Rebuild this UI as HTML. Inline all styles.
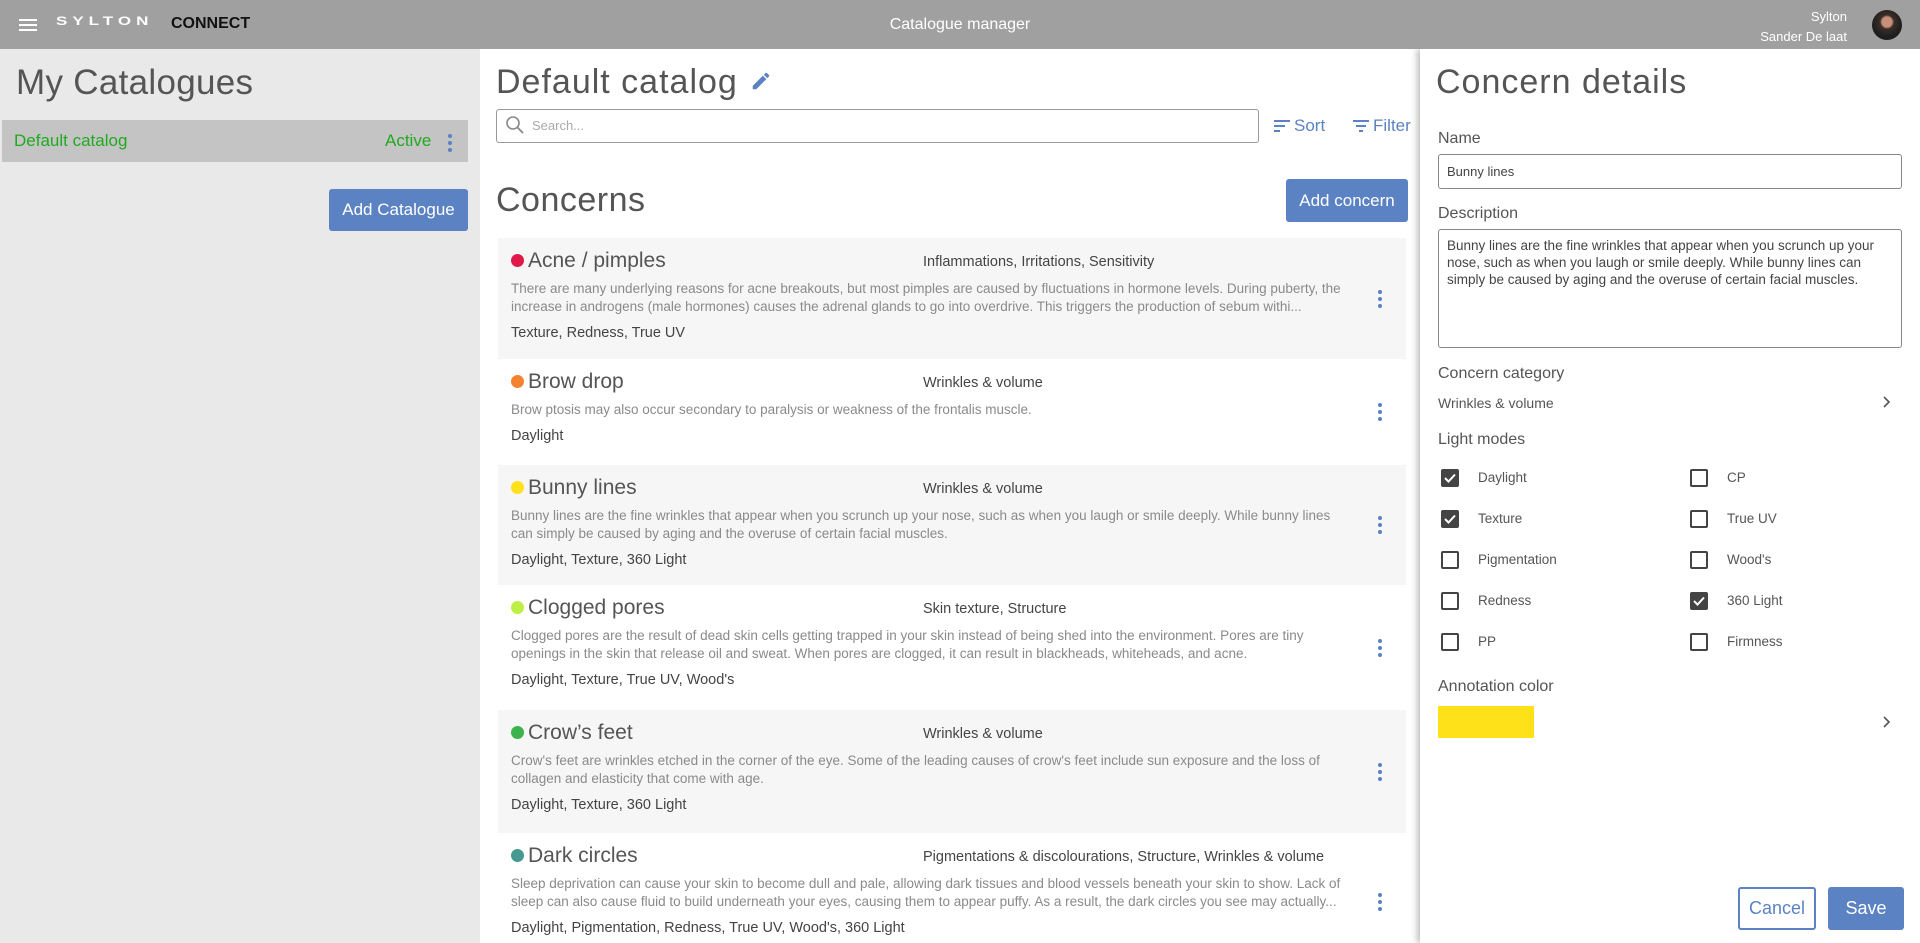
<!DOCTYPE html>
<html><head><meta charset="utf-8"><style>
*{box-sizing:border-box;margin:0;padding:0}
body{width:1920px;height:943px;overflow:hidden;background:#fff;font-family:"Liberation Sans",sans-serif;position:relative;color:#444}
.abs{position:absolute}
#hdr{left:0;top:0;width:1920px;height:49px;background:#a0a0a0;z-index:3}
#left{left:0;top:49px;width:480px;height:894px;background:#e9e9e9}
#right{left:1420px;top:49px;width:500px;height:894px;background:#fff;box-shadow:-3px 0 6px rgba(0,0,0,.25);z-index:2}
.narrow{font-family:"Liberation Sans Narrow","Liberation Sans",sans-serif}
.h1{font-weight:300;color:#555}
.btn{background:#5b82c2;color:#fff;border-radius:3px;text-align:center}
.card{left:498px;width:908px;padding:10px 0 0 13px}
.card.g{background:#f6f6f6}
.card .t{height:25px;display:flex;align-items:center;font-size:21px;color:#555}
.card .dot{width:13px;height:13px;border-radius:50%;margin-right:4px}
.card .cat{position:absolute;left:425px;top:16px;font-size:14.5px;color:#444}
.card .d{margin-top:7px;font-size:13.5px;line-height:18px;color:#8a8a8a;width:830px}
.card .tg{margin-top:7px;font-size:14.5px;line-height:20px;color:#444}
.card .k{position:absolute;left:880px;top:50%;margin-top:-9px;width:4px}
.k i{display:block;width:4px;height:4px;border-radius:50%;background:#5b82c2;margin-bottom:3px}
.lbl{font-size:16px;color:#555}
.cb{width:18px;height:18px;border:2px solid #444;border-radius:2px}
.cb.on{background:#444}
.cbl{font-size:13.5px;color:#555}
</style></head><body>
<div id="hdr" class="abs">
 <div class="abs" style="left:19px;top:19px;width:18px;height:2px;background:#fff;box-shadow:0 5px 0 #fff,0 10px 0 #fff"></div>
 <div class="abs" style="left:56px;top:14px;font-size:17px;font-weight:bold;color:#fff;letter-spacing:5px;transform:scaleY(.72);transform-origin:top left;line-height:20px">SYLTON</div>
 <div class="abs" style="left:171px;top:15px;font-size:16px;font-weight:bold;color:#111;letter-spacing:0">CONNECT</div>
 <div class="abs" style="left:0;width:1920px;top:16px;text-align:center;color:#fff;font-size:16px">Catalogue manager</div>
 <div class="abs" style="right:73px;top:7px;text-align:right;color:#fff;font-size:13px;line-height:20px">Sylton<br>Sander De laat</div>
 <div class="abs" style="left:1872px;top:10px;width:30px;height:30px;border-radius:50%;background:radial-gradient(circle at 50% 40%,#c89078 0 5px,#3a2e28 7px,#1e1e1e 15px)"></div>
</div>
<div id="left" class="abs">
 <div class="abs h1" style="left:16px;top:14px;font-size:35px;letter-spacing:.3px">My Catalogues</div>
 <div class="abs" style="left:2px;top:71px;width:466px;height:42px;background:#c4c4c4"></div>
 <div class="abs narrow" style="left:14px;top:82px;font-size:17px;color:#1faa1f">Default catalog</div>
 <div class="abs narrow" style="left:385px;top:82px;font-size:17px;color:#1faa1f">Active</div>
 <div class="abs k" style="left:448px;top:85px;width:4px"><i></i><i></i><i></i></div>
 <div class="abs btn narrow" style="left:329px;top:140px;width:139px;height:42px;line-height:42px;font-size:17px">Add Catalogue</div>
</div>
<div class="abs h1" style="left:496px;top:63px;font-size:34px;letter-spacing:1px">Default catalog</div>
<svg class="abs" style="left:750px;top:70px" width="22" height="22" viewBox="0 0 24 24"><path fill="#5b82c2" d="M3 17.25V21h3.75L17.81 9.94l-3.75-3.75L3 17.25zM20.71 7.04a1 1 0 000-1.41l-2.34-2.34a1 1 0 00-1.41 0l-1.83 1.83 3.75 3.75 1.83-1.83z"/></svg>
<div class="abs" style="left:496px;top:109px;width:763px;height:34px;border:1px solid #999;border-radius:3px"></div>
<svg class="abs" style="left:505px;top:115px" width="20" height="20" viewBox="0 0 20 20"><circle cx="8" cy="8" r="6" fill="none" stroke="#888" stroke-width="1.6"/><path d="M12.5 12.5L18 18" stroke="#888" stroke-width="1.8"/></svg>
<div class="abs narrow" style="left:532px;top:118px;font-size:13px;color:#aaa">Search...</div>
<svg class="abs" style="left:1274px;top:119px" width="16" height="14"><path d="M0 2h16M0 7h11M0 12h6" stroke="#5b82c2" stroke-width="2"/></svg>
<div class="abs narrow" style="left:1294px;top:116px;font-size:17px;color:#5b82c2">Sort</div>
<svg class="abs" style="left:1353px;top:119px" width="16" height="14"><path d="M0 2h16M3 7h10M6 12h4" stroke="#5b82c2" stroke-width="2"/></svg>
<div class="abs narrow" style="left:1373px;top:116px;font-size:17px;color:#5b82c2">Filter</div>
<div class="abs h1" style="left:496px;top:181px;font-size:34px;letter-spacing:.5px">Concerns</div>
<div class="abs btn narrow" style="left:1286px;top:179px;width:122px;height:43px;line-height:43px;font-size:17px">Add concern</div>

<div class="abs card g" style="top:238px;height:121px"><div class="t narrow"><span class="dot" style="background:#e0194b"></span>Acne / pimples</div><div class="cat narrow">Inflammations, Irritations, Sensitivity</div><div class="d narrow">There are many underlying reasons for acne breakouts, but most pimples are caused by fluctuations in hormone levels. During puberty, the increase in androgens (male hormones) causes the adrenal glands to go into overdrive. This triggers the production of sebum withi...</div><div class="tg narrow">Texture, Redness, True UV</div><div class="k"><i></i><i></i><i></i></div></div>
<div class="abs card" style="top:359px;height:106px"><div class="t narrow"><span class="dot" style="background:#f58231"></span>Brow drop</div><div class="cat narrow">Wrinkles &amp; volume</div><div class="d narrow">Brow ptosis may also occur secondary to paralysis or weakness of the frontalis muscle.</div><div class="tg narrow">Daylight</div><div class="k"><i></i><i></i><i></i></div></div>
<div class="abs card g" style="top:465px;height:120px"><div class="t narrow"><span class="dot" style="background:#ffe119"></span>Bunny lines</div><div class="cat narrow">Wrinkles &amp; volume</div><div class="d narrow">Bunny lines are the fine wrinkles that appear when you scrunch up your nose, such as when you laugh or smile deeply. While bunny lines can simply be caused by aging and the overuse of certain facial muscles.</div><div class="tg narrow">Daylight, Texture, 360 Light</div><div class="k"><i></i><i></i><i></i></div></div>
<div class="abs card" style="top:585px;height:125px"><div class="t narrow"><span class="dot" style="background:#bfef45"></span>Clogged pores</div><div class="cat narrow">Skin texture, Structure</div><div class="d narrow">Clogged pores are the result of dead skin cells getting trapped in your skin instead of being shed into the environment. Pores are tiny openings in the skin that release oil and sweat. When pores are clogged, it can result in blackheads, whiteheads, and acne.</div><div class="tg narrow">Daylight, Texture, True UV, Wood's</div><div class="k"><i></i><i></i><i></i></div></div>
<div class="abs card g" style="top:710px;height:123px"><div class="t narrow"><span class="dot" style="background:#3cb44b"></span>Crow’s feet</div><div class="cat narrow">Wrinkles &amp; volume</div><div class="d narrow">Crow's feet are wrinkles etched in the corner of the eye. Some of the leading causes of crow's feet include sun exposure and the loss of collagen and elasticity that come with age.</div><div class="tg narrow">Daylight, Texture, 360 Light</div><div class="k"><i></i><i></i><i></i></div></div>
<div class="abs card" style="top:833px;height:110px;overflow:hidden"><div class="t narrow"><span class="dot" style="background:#469990"></span>Dark circles</div><div class="cat narrow">Pigmentations &amp; discolourations, Structure, Wrinkles &amp; volume</div><div class="d narrow">Sleep deprivation can cause your skin to become dull and pale, allowing dark tissues and blood vessels beneath your skin to show. Lack of sleep can also cause fluid to build underneath your eyes, causing them to appear puffy. As a result, the dark circles you see may actually...</div><div class="tg narrow">Daylight, Pigmentation, Redness, True UV, Wood's, 360 Light</div><div class="k" style="top:60px;margin-top:0"><i></i><i></i><i></i></div></div>

<div id="right" class="abs">
 <div class="abs h1" style="left:16px;top:14px;font-size:34px;letter-spacing:1px">Concern details</div>
 <div class="abs lbl" style="left:18px;top:81px">Name</div>
 <div class="abs" style="left:18px;top:105px;width:464px;height:35px;border:1px solid #888;border-radius:3px;font-size:13px;color:#444;padding:9px 8px">Bunny lines</div>
 <div class="abs lbl" style="left:18px;top:156px">Description</div>
 <div class="abs" style="left:18px;top:180px;width:464px;height:119px;border:1px solid #888;border-radius:3px;font-size:13.5px;line-height:17px;color:#444;padding:7px 8px">Bunny lines are the fine wrinkles that appear when you scrunch up your nose, such as when you laugh or smile deeply. While bunny lines can simply be caused by aging and the overuse of certain facial muscles.</div>
 <div class="abs lbl" style="left:18px;top:316px">Concern category</div>
 <div class="abs" style="left:18px;top:346px;font-size:14px;color:#555">Wrinkles &amp; volume</div>
 <svg class="abs" style="left:462px;top:346px" width="10" height="14"><path d="M2 2l5 5-5 5" fill="none" stroke="#555" stroke-width="1.6"/></svg>
 <div class="abs lbl" style="left:18px;top:382px">Light modes</div>
 <div class="abs cb on" style="left:21px;top:420px"></div><div class="abs cbl" style="left:58px;top:421px">Daylight</div>
 <div class="abs cb on" style="left:21px;top:461px"></div><div class="abs cbl" style="left:58px;top:462px">Texture</div>
 <div class="abs cb" style="left:21px;top:502px"></div><div class="abs cbl" style="left:58px;top:503px">Pigmentation</div>
 <div class="abs cb" style="left:21px;top:543px"></div><div class="abs cbl" style="left:58px;top:544px">Redness</div>
 <div class="abs cb" style="left:21px;top:584px"></div><div class="abs cbl" style="left:58px;top:585px">PP</div>
 <div class="abs cb" style="left:270px;top:420px"></div><div class="abs cbl" style="left:307px;top:421px">CP</div>
 <div class="abs cb" style="left:270px;top:461px"></div><div class="abs cbl" style="left:307px;top:462px">True UV</div>
 <div class="abs cb" style="left:270px;top:502px"></div><div class="abs cbl" style="left:307px;top:503px">Wood's</div>
 <div class="abs cb on" style="left:270px;top:543px"></div><div class="abs cbl" style="left:307px;top:544px">360 Light</div>
 <div class="abs cb" style="left:270px;top:584px"></div><div class="abs cbl" style="left:307px;top:585px">Firmness</div>
 <svg class="abs" style="left:21px;top:420px" width="18" height="18"><path d="M4 9l3.5 3.5L14 5.5" fill="none" stroke="#fff" stroke-width="2"/></svg>
 <svg class="abs" style="left:21px;top:461px" width="18" height="18"><path d="M4 9l3.5 3.5L14 5.5" fill="none" stroke="#fff" stroke-width="2"/></svg>
 <svg class="abs" style="left:270px;top:543px" width="18" height="18"><path d="M4 9l3.5 3.5L14 5.5" fill="none" stroke="#fff" stroke-width="2"/></svg>
 <div class="abs lbl" style="left:18px;top:629px">Annotation color</div>
 <div class="abs" style="left:18px;top:657px;width:96px;height:32px;background:#ffe119"></div>
 <svg class="abs" style="left:462px;top:666px" width="10" height="14"><path d="M2 2l5 5-5 5" fill="none" stroke="#555" stroke-width="1.6"/></svg>
 <div class="abs narrow" style="left:318px;top:838px;width:78px;height:43px;border:2px solid #5b82c2;border-radius:3px;color:#5b82c2;font-size:18px;text-align:center;line-height:39px">Cancel</div>
 <div class="abs btn narrow" style="left:408px;top:838px;width:76px;height:43px;line-height:43px;font-size:18px">Save</div>
</div>
</body></html>
